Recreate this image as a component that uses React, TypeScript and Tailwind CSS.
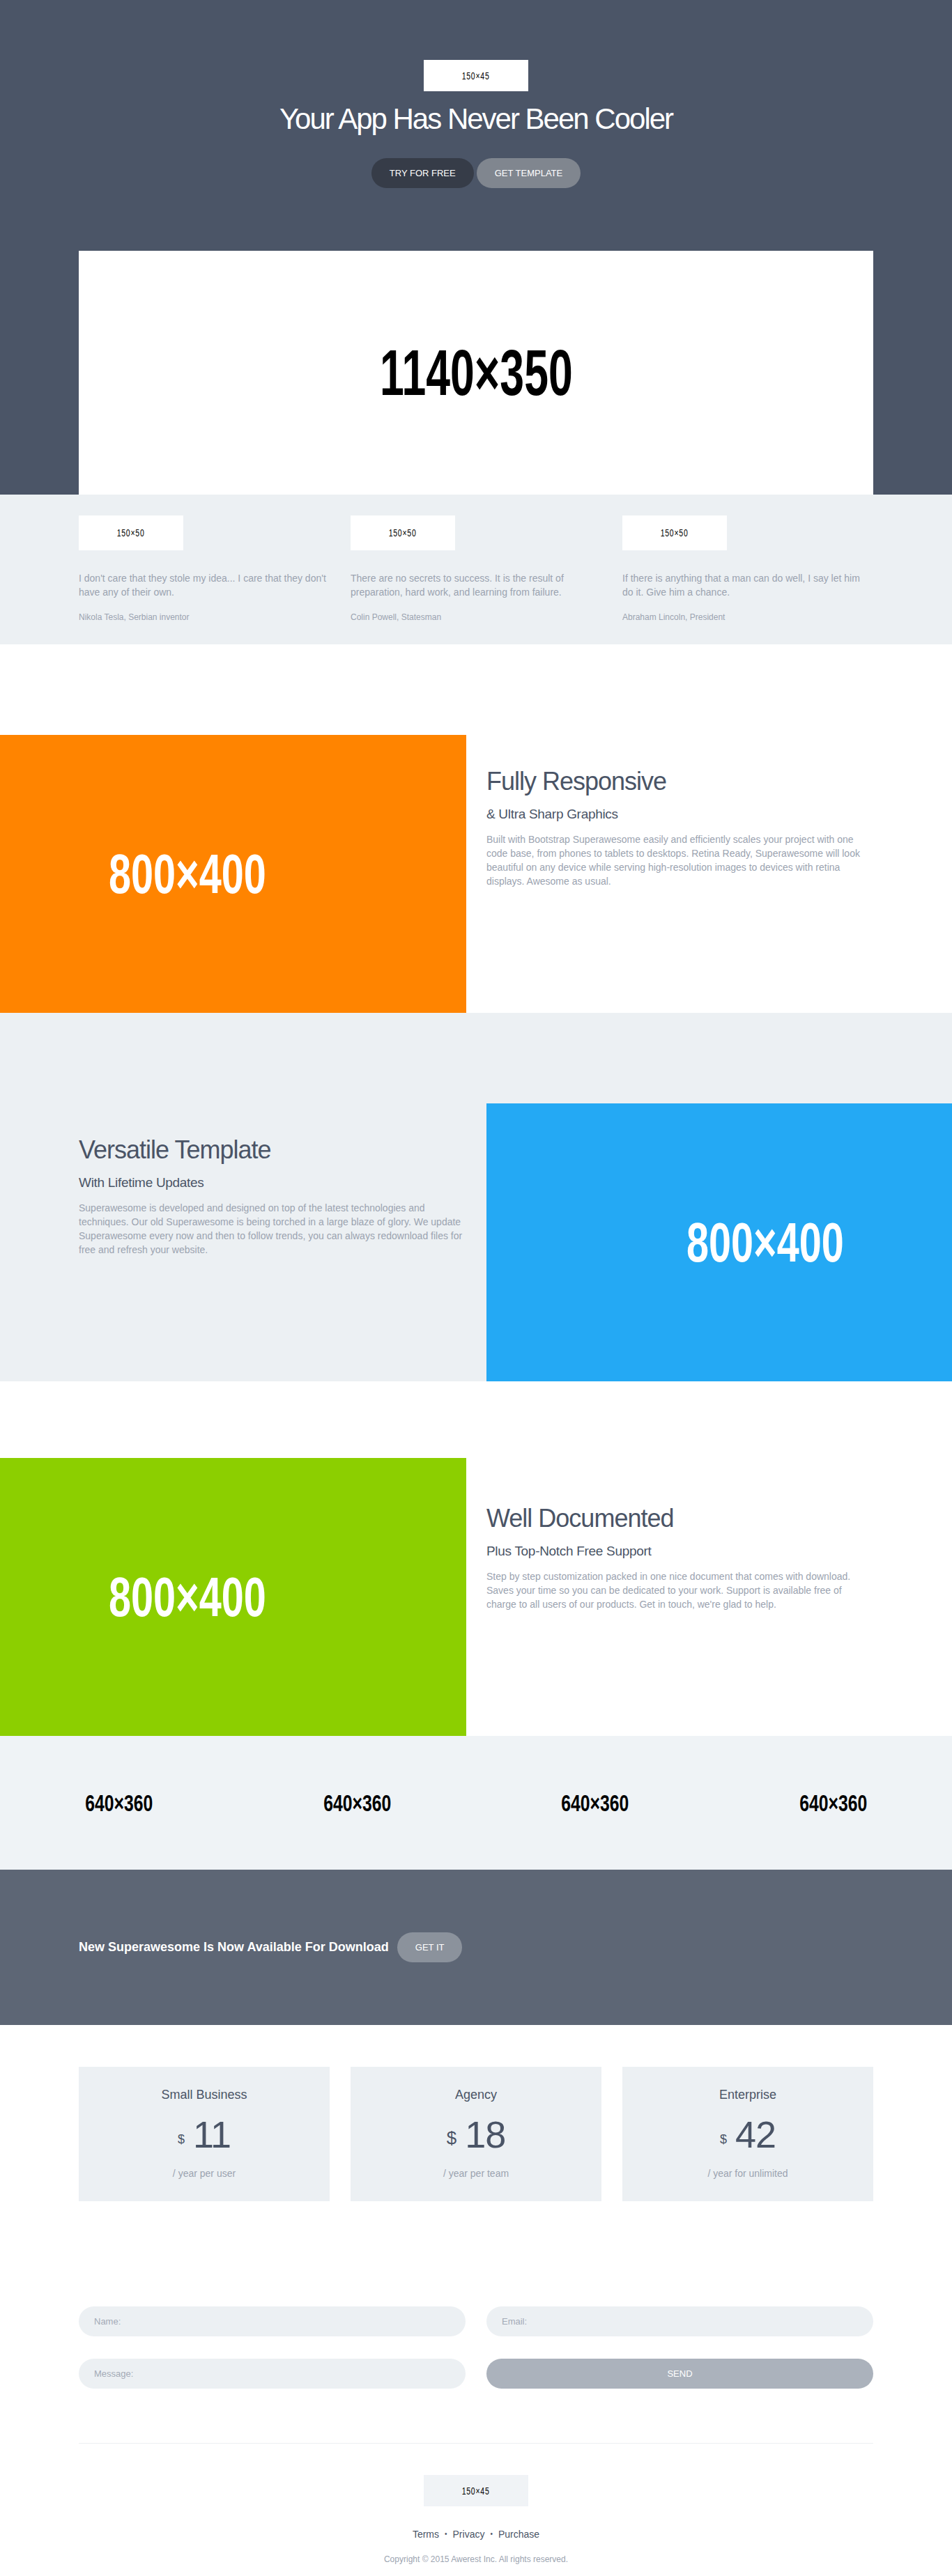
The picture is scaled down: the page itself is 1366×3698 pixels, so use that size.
import React from "react";

type Quote = { lines: string[]; author: string };

type Feature = {
  title: string;
  subtitle: string;
  lines: string[];
};

const quotes: Quote[] = [
  {
    lines: ["I don't care that they stole my idea... I care that they don't", "have any of their own."],
    author: "Nikola Tesla, Serbian inventor",
  },
  {
    lines: ["There are no secrets to success. It is the result of", "preparation, hard work, and learning from failure."],
    author: "Colin Powell, Statesman",
  },
  {
    lines: ["If there is anything that a man can do well, I say let him", "do it. Give him a chance."],
    author: "Abraham Lincoln, President",
  },
];

const responsive: Feature = {
  title: "Fully Responsive",
  subtitle: "& Ultra Sharp Graphics",
  lines: [
    "Built with Bootstrap Superawesome easily and efficiently scales your project with one",
    "code base, from phones to tablets to desktops. Retina Ready, Superawesome will look",
    "beautiful on any device while serving high-resolution images to devices with retina",
    "displays. Awesome as usual.",
  ],
};

const versatile: Feature = {
  title: "Versatile Template",
  subtitle: "With Lifetime Updates",
  lines: [
    "Superawesome is developed and designed on top of the latest technologies and",
    "techniques. Our old Superawesome is being torched in a large blaze of glory. We update",
    "Superawesome every now and then to follow trends, you can always redownload files for",
    "free and refresh your website.",
  ],
};

const documented: Feature = {
  title: "Well Documented",
  subtitle: "Plus Top-Notch Free Support",
  lines: [
    "Step by step customization packed in one nice document that comes with download.",
    "Saves your time so you can be dedicated to your work. Support is available free of",
    "charge to all users of our products. Get in touch, we're glad to help.",
  ],
};

const plans = [
  { name: "Small Business", price: "11", note: "/ year per user", dollar: "text-[18px] mb-[11px]" },
  { name: "Agency", price: "18", note: "/ year per team", dollar: "text-[26px] mb-[9px]" },
  { name: "Enterprise", price: "42", note: "/ year for unlimited", dollar: "text-[18px] mb-[11px]" },
];

function SmallLogo({ label, bg }: { label: string; bg: string }) {
  return (
    <div className={`flex h-[45px] w-[150px] items-center justify-center ${bg}`}>
      <span className="scale-x-[0.75] text-[14px] leading-none tracking-[1px] text-black">{label}</span>
    </div>
  );
}

function FeatureText({ feature }: { feature: Feature }) {
  return (
    <>
      <h2 className="text-[36px] leading-[40px] tracking-[-1px] text-[#4a5466]">{feature.title}</h2>
      <h4 className="mt-[16px] text-[19px] leading-[22px] tracking-[-0.3px] text-[#4a5466]">{feature.subtitle}</h4>
      <p className="mt-[15px] text-[14px] leading-5 text-[#9ba3b0]">
        {feature.lines.map((line) => (
          <span key={line} className="block whitespace-nowrap">
            {line}
          </span>
        ))}
      </p>
    </>
  );
}

function ImageBlock({ color, className }: { color: string; className: string }) {
  return (
    <div className={`flex h-[399px] overflow-hidden ${color} ${className}`}>
      <div className="flex w-[800px] shrink-0 items-center justify-center">
        <span className="scale-x-[0.72] text-[80px] font-bold leading-none text-white">800×400</span>
      </div>
    </div>
  );
}

export default function App() {
  return (
    <div className="min-h-[3698px] bg-white font-['Liberation_Sans',Arial,sans-serif] text-[14px] text-[#9ba3b0]">
      {/* hero */}
      <section className="bg-[#4b5567] pt-[86px]">
        <div className="flex flex-col items-center">
          <SmallLogo label="150×45" bg="bg-white" />
          <h1 className="mt-[17px] text-[42px] leading-[46px] tracking-[-2px] text-white">
            Your App Has Never Been Cooler
          </h1>
          <div className="mt-[33px] flex gap-[4px]">
            <button
              type="button"
              className="flex h-[43px] items-center rounded-full bg-[#363c48] px-[26px] text-[13px] text-white"
            >
              TRY FOR FREE
            </button>
            <button
              type="button"
              className="flex h-[43px] items-center rounded-full bg-[#80868f] px-[26px] text-[13px] text-white"
            >
              GET TEMPLATE
            </button>
          </div>
        </div>
        <div className="mx-auto mt-[90px] flex h-[350px] w-[1140px] items-center justify-center bg-white">
          <span className="scale-x-[0.68] text-[92px] font-bold leading-none text-black">1140×350</span>
        </div>
      </section>

      {/* quotes */}
      <section className="bg-[#ecf0f3] pb-[29px] pt-[30px]">
        <div className="mx-auto flex w-[1140px] gap-[30px]">
          {quotes.map((q) => (
            <div key={q.author} className="w-[360px]">
              <div className="flex h-[50px] w-[150px] items-center justify-center bg-white">
                <span className="scale-x-[0.75] text-[14px] leading-none tracking-[1px] text-black">150×50</span>
              </div>
              <p className="mt-[30px] leading-5">
                {q.lines.map((line) => (
                  <span key={line} className="block whitespace-nowrap">
                    {line}
                  </span>
                ))}
              </p>
              <p className="mt-4 text-[12px] leading-5">{q.author}</p>
            </div>
          ))}
        </div>
      </section>

      {/* features */}
      <section className="bg-white pt-[130px]">
        <div className="flex">
          <ImageBlock color="bg-[#ff8400]" className="w-[669px] justify-end" />
          <div className="ml-[29px] mt-[47px] w-[555px]">
            <FeatureText feature={responsive} />
          </div>
        </div>
      </section>

      <section className="bg-[#ecf0f3] pt-[130px]">
        <div className="flex">
          <div className="ml-[113px] mt-[47px] w-[555px]">
            <FeatureText feature={versatile} />
          </div>
          <ImageBlock color="bg-[#24a9f4]" className="ml-[30px] flex-1 justify-start" />
        </div>
      </section>

      <section className="bg-white pt-[110px]">
        <div className="flex">
          <ImageBlock color="bg-[#8ccf00]" className="w-[669px] justify-end" />
          <div className="ml-[29px] mt-[67px] w-[555px]">
            <FeatureText feature={documented} />
          </div>
        </div>
      </section>

      {/* gallery */}
      <section className="flex bg-[#eff3f6]">
        {[0, 1, 2, 3].map((i) => (
          <div key={i} className="flex h-[192px] flex-1 items-center justify-center">
            <span className="scale-x-[0.75] text-[33px] font-bold leading-none text-black">640×360</span>
          </div>
        ))}
      </section>

      {/* call to action */}
      <section className="flex h-[223px] items-center bg-[#5d6675]">
        <div className="mx-auto flex w-[1140px] items-center gap-[12px]">
          <p className="text-[18px] font-bold text-white">New Superawesome Is Now Available For Download</p>
          <button
            type="button"
            className="flex h-[43px] items-center rounded-full bg-[#8b929c] px-[26px] text-[13px] text-white"
          >
            GET IT
          </button>
        </div>
      </section>

      {/* pricing */}
      <section className="pb-[151px] pt-[60px]">
        <div className="mx-auto grid w-[1140px] grid-cols-3 gap-[30px]">
          {plans.map((plan) => (
            <div key={plan.name} className="flex h-[193px] flex-col items-center bg-[#ecf0f3] pt-[30px]">
              <p className="text-[18px] leading-5 text-[#4a5466]">{plan.name}</p>
              <div className="mt-[20px] flex items-end text-[#4a5466]">
                <span className={`mr-[12px] leading-none ${plan.dollar}`}>$</span>
                <span className="text-[54px] leading-none tracking-[-1px]">{plan.price}</span>
              </div>
              <p className="mt-[19px] leading-5">{plan.note}</p>
            </div>
          ))}
        </div>
      </section>

      {/* contact form */}
      <section className="mx-auto w-[1140px]">
        <div className="grid grid-cols-2 gap-x-[30px] gap-y-[32px]">
          <input
            className="h-[43px] rounded-full bg-[#ecf0f3] px-[22px] text-[13px] text-[#4a5466] outline-none placeholder:text-[#a3aab6]"
            placeholder="Name:"
          />
          <input
            className="h-[43px] rounded-full bg-[#ecf0f3] px-[22px] text-[13px] text-[#4a5466] outline-none placeholder:text-[#a3aab6]"
            placeholder="Email:"
          />
          <input
            className="h-[43px] rounded-full bg-[#ecf0f3] px-[22px] text-[13px] text-[#4a5466] outline-none placeholder:text-[#a3aab6]"
            placeholder="Message:"
          />
          <button type="button" className="h-[43px] rounded-full bg-[#abb2bc] text-[13px] text-white">
            SEND
          </button>
        </div>
        <div className="mt-[78px] h-px bg-[#eceff2]" />
      </section>

      {/* footer */}
      <footer className="flex flex-col items-center pb-[16px] pt-[45px]">
        <SmallLogo label="150×45" bg="bg-[#f0f3f6]" />
        <div className="mt-[30px] flex items-center gap-[8px] leading-5 text-[#4a5466]">
          <span>Terms</span>
          <span className="text-[10px]">•</span>
          <span>Privacy</span>
          <span className="text-[10px]">•</span>
          <span>Purchase</span>
        </div>
        <p className="mt-[18px] text-[12px] leading-4">Copyright © 2015 Awerest Inc. All rights reserved.</p>
      </footer>
    </div>
  );
}
